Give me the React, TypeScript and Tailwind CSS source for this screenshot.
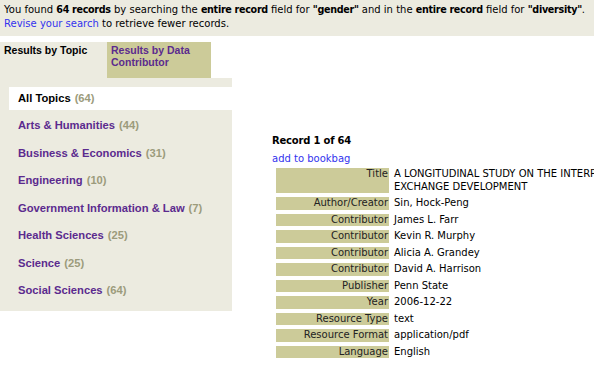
import React from 'react';

const topics = [
  { name: 'Arts & Humanities', count: 44 },
  { name: 'Business & Economics', count: 31 },
  { name: 'Engineering', count: 10 },
  { name: 'Government Information & Law', count: 7 },
  { name: 'Health Sciences', count: 25 },
  { name: 'Science', count: 25 },
  { name: 'Social Sciences', count: 64 },
];

const fields: { label: string; value: React.ReactNode }[] = [
  {
    label: 'Title',
    value: (
      <>
        A LONGITUDINAL STUDY ON THE INTERPERSONAL JUSTICE AND LEADER-MEMBER
        <br />
        EXCHANGE DEVELOPMENT
      </>
    ),
  },
  { label: 'Author/Creator', value: 'Sin, Hock-Peng' },
  { label: 'Contributor', value: 'James L. Farr' },
  { label: 'Contributor', value: 'Kevin R. Murphy' },
  { label: 'Contributor', value: 'Alicia A. Grandey' },
  { label: 'Contributor', value: 'David A. Harrison' },
  { label: 'Publisher', value: 'Penn State' },
  { label: 'Year', value: '2006-12-22' },
  { label: 'Resource Type', value: 'text' },
  { label: 'Resource Format', value: 'application/pdf' },
  { label: 'Language', value: 'English' },
];

const B: React.FC<{ children: React.ReactNode }> = ({ children }) => (
  <b className="text-[9.6px] tracking-[-0.3px]">{children}</b>
);

const App: React.FC = () => {
  return (
    <div className="w-[594px] h-[369px] overflow-hidden bg-white text-black font-['Verdana','DejaVu_Sans',sans-serif]">
      {/* Search summary */}
      <div className="h-[36px] bg-[#ecebe0] px-[4px] pt-[3px] text-[10px] leading-[14px] whitespace-nowrap">
        <div>
          You found <B>64 records</B> by searching the <B>entire record</B> field for <B>"gender"</B> and in the{' '}
          <B>entire record</B> field for <B>"diversity"</B>.
        </div>
        <div>
          <span className="text-[#3333ee]">Revise your search</span> to retrieve fewer records.
        </div>
      </div>

      <div className="flex mt-[6px]">
        {/* Sidebar */}
        <div className="w-[232px] shrink-0 font-['Liberation_Sans','Arial',sans-serif] font-bold">
          <div className="flex h-[36px] text-[10.5px] leading-[12px]">
            <div className="w-[107px] bg-[#ecebe0] pl-[4px] pt-[2px] text-black">Results by Topic</div>
            <div className="w-[104px] bg-[#cccb99] pl-[4px] pt-[2px] text-[#5b2a8e]">
              Results by Data
              <br />
              Contributor
            </div>
          </div>
          <div className="h-[233px] bg-[#ecebe0] pt-[9px] text-[11.2px]">
            <div className="ml-[9px] h-[23px] bg-white pl-[9px] flex items-center">
              <span className="text-black">All Topics</span>
              <span className="ml-[4px] text-[#9c9b7c]">(64)</span>
            </div>
            <div className="mt-[2px]">
              {topics.map((t) => (
                <div key={t.name} className="h-[27.5px] pl-[18px] flex items-center">
                  <span className="text-[#5b2a8e]">{t.name}</span>
                  <span className="ml-[4px] text-[#9c9b7c]">({t.count})</span>
                </div>
              ))}
            </div>
          </div>
        </div>

        {/* Record */}
        <div className="flex-1 pl-[40px] pt-[92px] text-[10px] whitespace-nowrap">
          <div className="font-bold leading-[14px] tracking-[-0.2px]">Record 1 of 64</div>
          <div className="mt-[5px] leading-[12px] text-[#3333ee]">add to bookbag</div>
          <table className="border-separate border-spacing-[4px] -mt-[1px]">
            <tbody>
              {fields.map((f, i) => (
                <tr key={i}>
                  <td className="bg-[#cccb99] text-right align-top leading-[12.5px] p-0 text-[#222]">
                    <div className="w-[113px] pr-[1px]">{f.label}</div>
                  </td>
                  <td className="align-top leading-[12.5px] pl-[1px]">{f.value}</td>
                </tr>
              ))}
            </tbody>
          </table>
        </div>
      </div>
    </div>
  );
};

export default App;
